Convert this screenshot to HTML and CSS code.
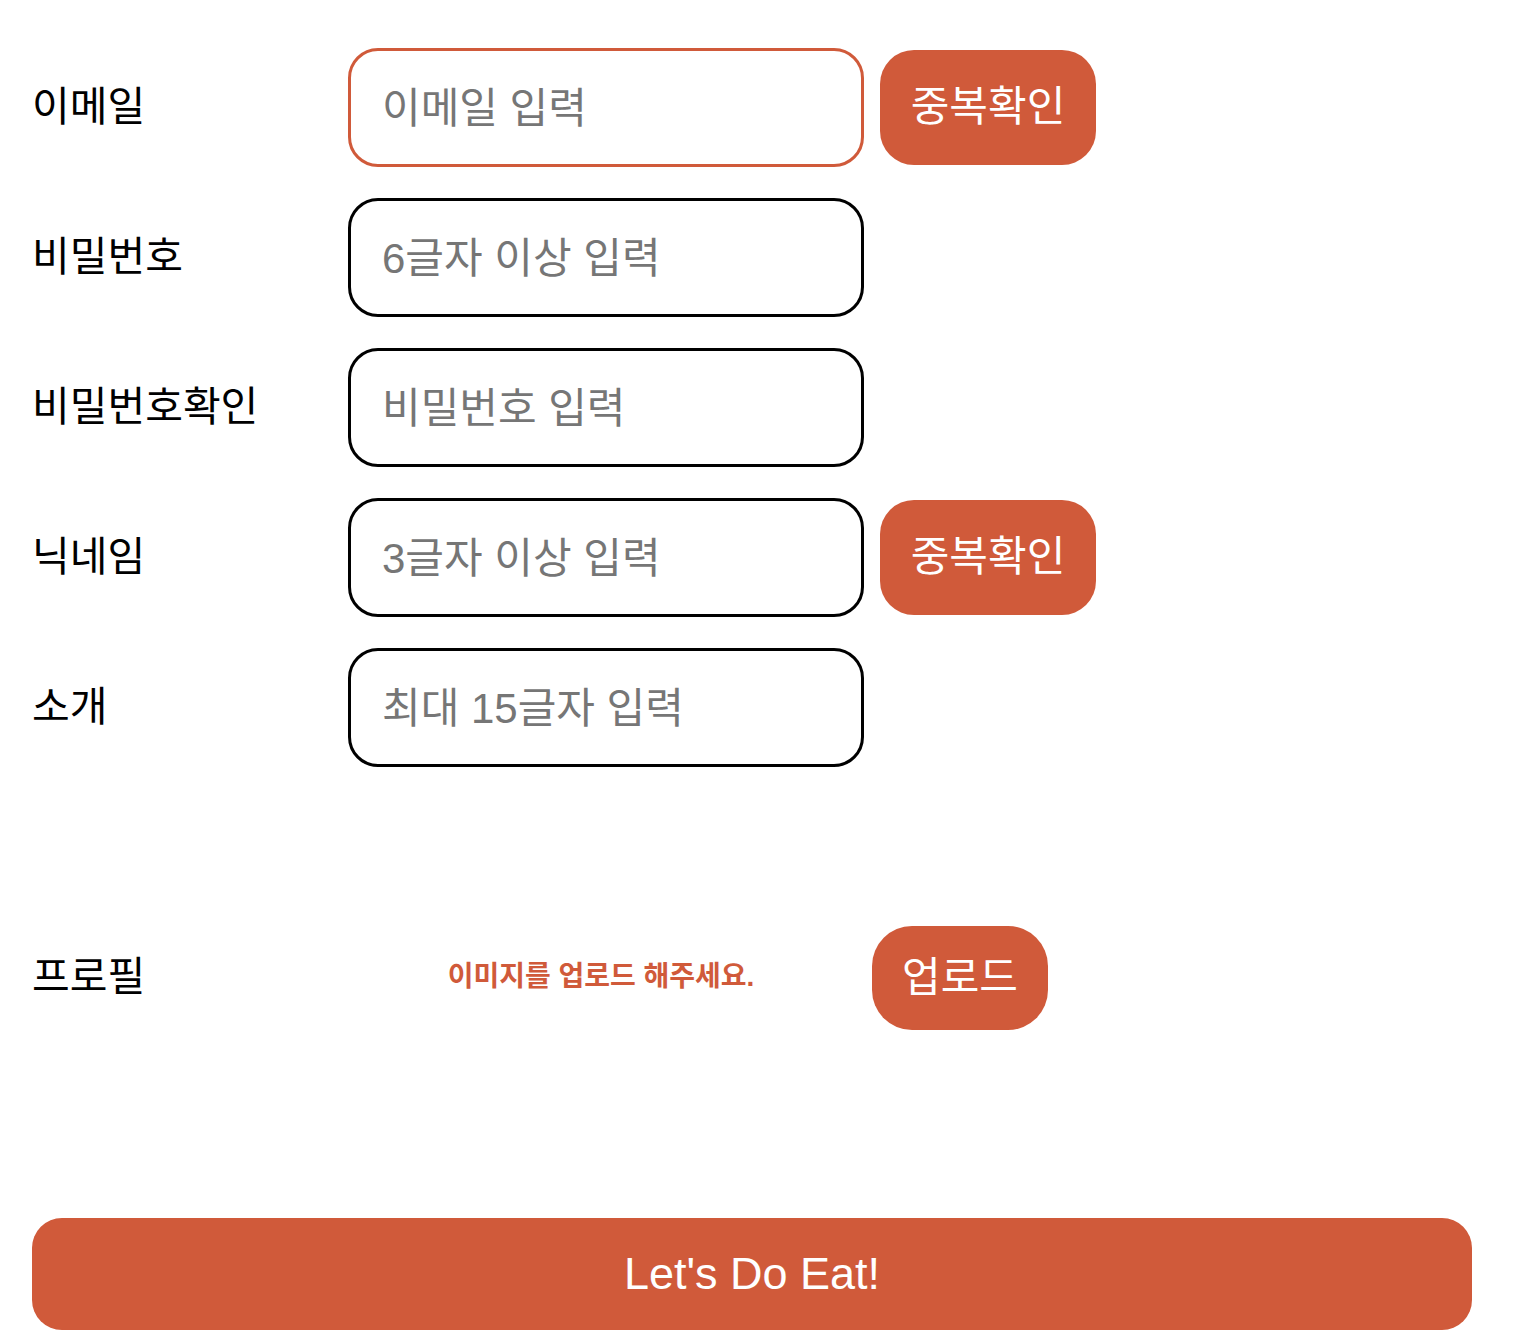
FILE: index.html
```html
<!DOCTYPE html>
<html lang="ko">
<head>
<meta charset="utf-8">
<link rel="stylesheet" href="styles.css">
</head>
<body>
<form class="signup">
  <div class="row">
    <label class="label">이메일</label>
    <input class="field field-focus" type="text" placeholder="이메일 입력">
    <button type="button" class="btn">중복확인</button>
  </div>
  <div class="row">
    <label class="label">비밀번호</label>
    <input class="field" type="password" placeholder="6글자 이상 입력">
  </div>
  <div class="row">
    <label class="label">비밀번호확인</label>
    <input class="field" type="password" placeholder="비밀번호 입력">
  </div>
  <div class="row">
    <label class="label">닉네임</label>
    <input class="field" type="text" placeholder="3글자 이상 입력">
    <button type="button" class="btn">중복확인</button>
  </div>
  <div class="row">
    <label class="label">소개</label>
    <input class="field" type="text" placeholder="최대 15글자 입력">
  </div>
  <div class="row profile">
    <label class="label">프로필</label>
    <div class="preview">이미지를 업로드 해주세요.</div>
    <button type="button" class="btn btn-upload">업로드</button>
  </div>
  <button type="submit" class="submit">Let's Do Eat!</button>
</form>
</body>
</html>
```
FILE: styles.css
```css
* { box-sizing: border-box; }
html, body { margin: 0; background: #fff; }
body {
  font-family: "Liberation Sans", "Noto Sans CJK KR", sans-serif;
  color: #000;
}
.signup {
  display: flex;
  flex-direction: column;
  padding: 48px 48px 0 32px;
}
.row {
  display: flex;
  align-items: center;
  height: 119px;
  margin-bottom: 31px;
}
.label {
  width: 316px;
  flex: none;
  font-size: 41px;
  line-height: 1.2;
  padding-bottom: 0;
}
.field {
  width: 516px;
  height: 119px;
  border: 3px solid #000;
  border-radius: 30px;
  padding: 2px 0 0 31px;
  font-family: "Liberation Sans", "Noto Sans CJK KR", sans-serif;
  font-size: 42px;
  color: #000;
  outline: none;
  background: #fff;
}
.field::placeholder { color: #767676; }
.field-focus { border-color: #d05a3a; }
.btn {
  margin-left: 16px;
  width: 216px;
  height: 115px;
  border: none;
  border-radius: 34px;
  background: #d05a3a;
  color: #fff;
  font-family: "Liberation Sans", "Noto Sans CJK KR", sans-serif;
  font-size: 42px;
  padding: 0;
  line-height: 1.2;
}
.profile {
  margin-top: 128px;
  height: 104px;
  margin-bottom: 0;
}
.preview {
  width: 516px;
  text-align: center;
  color: #d05a3a;
  font-weight: bold;
  font-size: 28px;
  line-height: 1.2;
  padding: 0 10px 2px 0;
}
.btn-upload {
  margin-left: 8px;
  width: 176px;
  height: 104px;
  border-radius: 40px;
  padding: 0;
}
.submit {
  margin-top: 188px;
  width: 1440px;
  height: 112px;
  border: none;
  border-radius: 30px;
  background: #d05a3a;
  color: #fff;
  font-family: "Liberation Sans", "Noto Sans CJK KR", sans-serif;
  font-size: 45px;
  padding: 0;
}
```
